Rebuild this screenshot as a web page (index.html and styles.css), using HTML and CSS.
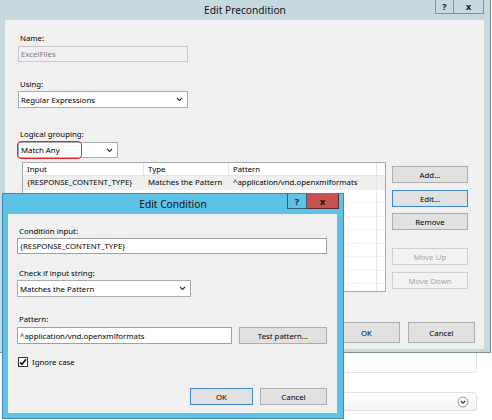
FILE: index.html
```html
<!DOCTYPE html>
<html>
<head>
<meta charset="utf-8">
<link rel="stylesheet" href="styles.css">
</head>
<body>
<div class="page">
  <div class="panel"></div>
  <div class="panel bar">
    <svg class="circle-chev" width="12" height="12" viewBox="0 0 12 12"><circle cx="6" cy="6" r="5" fill="#fafafa" stroke="#9a9a9a" stroke-width="1"/><path d="M3.8 5 L6 7.2 L8.2 5" fill="none" stroke="#444" stroke-width="1.2"/></svg>
  </div>
</div>

<div class="win outer">
  <div class="titlebar">
    <span></span>
    <span class="title">Edit Precondition</span>
    <span class="tb-buttons">
      <span class="tb-btn help">?</span><span class="tb-btn close">x</span>
    </span>
  </div>
  <div class="content oc">
    <div class="label first">Name:</div>
    <div class="field disabled w170">ExcelFiles</div>
    <div class="label l-using">Using:</div>
    <div class="field select w170 h17">Regular Expressions<svg width="7" height="5" viewBox="0 0 7 5"><path d="M1 1 L3.5 3.5 L6 1" fill="none" stroke="#333" stroke-width="1.1"/></svg></div>
    <div class="label l-group">Logical grouping:</div>
    <div class="group-wrap">
      <div class="field select w100">Match Any<svg width="7" height="5" viewBox="0 0 7 5"><path d="M1 1 L3.5 3.5 L6 1" fill="none" stroke="#333" stroke-width="1.1"/></svg></div>
      <div class="highlight"></div>
    </div>
    <div class="list-row">
      <div class="grid">
        <div class="gr head"><span class="c1">Input</span><span class="c2">Type</span><span class="c3">Pattern</span><span class="c4"></span></div>
        <div class="gr sel"><span class="c1">{RESPONSE_CONTENT_TYPE}</span><span class="c2">Matches the Pattern</span><span class="c3">^application/vnd.openxmlformats</span><span class="c4"></span></div>
        <div class="gr"><span class="c1"></span><span class="c2"></span><span class="c3"></span><span class="c4"></span></div>
        <div class="gr"><span class="c1"></span><span class="c2"></span><span class="c3"></span><span class="c4"></span></div>
        <div class="gr"><span class="c1"></span><span class="c2"></span><span class="c3"></span><span class="c4"></span></div>
        <div class="gr"><span class="c1"></span><span class="c2"></span><span class="c3"></span><span class="c4"></span></div>
        <div class="gr"><span class="c1"></span><span class="c2"></span><span class="c3"></span><span class="c4"></span></div>
        <div class="gr"><span class="c1"></span><span class="c2"></span><span class="c3"></span><span class="c4"></span></div>
        <div class="gr"><span class="c1"></span><span class="c2"></span><span class="c3"></span><span class="c4"></span></div>
        <div class="gr"><span class="c1"></span><span class="c2"></span><span class="c3"></span><span class="c4"></span></div>
      </div>
      <div class="side">
        <div class="btn b-add">Add...</div>
        <div class="btn focus b-edit">Edit...</div>
        <div class="btn b-remove">Remove</div>
        <div class="btn dis b-up">Move Up</div>
        <div class="btn dis b-down">Move Down</div>
      </div>
    </div>
    <div class="footer outer-foot">
      <div class="btn big w67">OK</div>
      <div class="btn big w67">Cancel</div>
    </div>
  </div>
</div>

<div class="win inner">
  <div class="titlebar">
    <span></span>
    <span class="title">Edit Condition</span>
    <span class="tb-buttons">
      <span class="tb-btn help">?</span><span class="tb-btn close">x</span>
    </span>
  </div>
  <div class="content ic">
    <div class="label i-first">Condition input:</div>
    <div class="field w310 white">{RESPONSE_CONTENT_TYPE}</div>
    <div class="label i-check">Check if input string:</div>
    <div class="field select w174 h17">Matches the Pattern<svg width="7" height="5" viewBox="0 0 7 5"><path d="M1 1 L3.5 3.5 L6 1" fill="none" stroke="#333" stroke-width="1.1"/></svg></div>
    <div class="label i-pat">Pattern:</div>
    <div class="pat-row">
      <div class="field w215 h17 white">^application/vnd.openxmlformats</div>
      <div class="btn w88">Test pattern...</div>
    </div>
    <div class="check-row">
      <span class="checkbox"><svg width="8" height="8" viewBox="0 0 8 8"><path d="M1 4.2 L3 6.3 L7 1.3" fill="none" stroke="#111" stroke-width="1.6"/></svg></span>
      <span>Ignore case</span>
    </div>
    <div class="footer inner-foot">
      <div class="btn focus w63">OK</div>
      <div class="btn w67">Cancel</div>
    </div>
  </div>
</div>
</body>
</html>
```
FILE: styles.css
```css
* { box-sizing: border-box; }
html, body { margin: 0; padding: 0; }
body {
  width: 492px; height: 420px; overflow: hidden; position: relative;
  background: #ffffff;
  font-family: "Noto Sans", "Open Sans", sans-serif;
  font-size: 7.8px; color: #000;
}
.page { padding-top: 300px; }
.panel {
  margin-left: 200px; width: 277px; height: 73px;
  border: 1px solid #e2e2e2; border-radius: 3px; background: #fff;
}
.panel.bar {
  margin-top: 19px; height: 19px;
  background: linear-gradient(#ffffff, #f3f3f3);
  display: flex; justify-content: flex-end; align-items: center; padding-right: 7px;
}

.win { position: absolute; display: flex; flex-direction: column; }
.outer {
  left: 0; top: 0; width: 491px; height: 353px;
  background: #c6d9df;
  border-right: 1px solid #7c8f97; border-bottom: 1px solid #7c8f97;
}
.inner {
  left: 2px; top: 193px; width: 342px; height: 226px;
  background: #5ec2e7;
  border: 1px solid #3b8db0;
}
.titlebar {
  height: 20px; flex: none;
  display: grid; grid-template-columns: 1fr auto 1fr; align-items: start;
}
.title { font-size: 10.2px; line-height: 20px; color: #111; }
.tb-buttons { justify-self: end; display: flex; }
.tb-btn {
  height: 14px; display: flex; align-items: center; justify-content: center;
  font-weight: bold; font-size: 9px; color: #111;
}
.outer .tb-buttons { margin-right: 6px; }
.outer .help { width: 19px; border: 1px solid #7f939b; border-top: none; }
.outer .close { width: 30px; border: 1px solid #7f939b; border-top: none; border-left: none; }
.inner .tb-buttons { margin-right: 4px; margin-top: 0; }
.inner .help { width: 20px; height: 15px; border: 1px solid #2f5f73; border-top: none; background: #5ec2e7; }
.inner .close { width: 32px; height: 15px; background: #c75050; border: 1px solid #5a2a2a; border-top: none; border-left: none; }

.content { background: #f0f0f0; flex: 1; display: flex; flex-direction: column; align-items: flex-start; }
.oc { margin: 0 6px 3px 5px; padding-left: 13px; }
.ic { margin: 0 6px 5px 5px; padding-left: 9px; }

.label { line-height: 11px; height: 11px; padding-left: 2px; }
.label.first { margin-top: 13px; }
.l-using { margin-top: 17px; }
.l-group { margin-top: 21px; }
.i-first { margin-top: 12px; }
.i-check { margin-top: 14px; }
.i-pat { margin-top: 17px; }

.field {
  height: 16px; border: 1px solid #acacac; background: #fff;
  padding-left: 2px; line-height: 14px; margin-top: 2px;
  display: flex; align-items: center; justify-content: space-between; padding-right: 4px;
  white-space: nowrap;
}
.field.h17 { height: 17px; margin-top: 1px; }
.field.disabled { background: #f0f0f0; border-color: #c8c8c8; color: #7a7a7a; }
.field.white { border-color: #a0a0a0; }
.w170 { width: 170px; }
.w100 { width: 100px; }
.w310 { width: 310px; margin-top: 1px; }
.w174 { width: 174px; }
.w215 { width: 215px; }

.group-wrap { position: relative; margin-top: 0; }
.highlight {
  position: absolute; left: -1px; top: 1px; width: 65px; height: 18px;
  border: 1.5px solid #e4242e; border-radius: 4px;
}

.list-row { display: flex; margin-top: 4px; align-items: flex-start; }
.grid {
  margin-left: 4px; width: 364px; height: 130px; overflow: hidden;
  border: 1px solid #a9a9a9; background: #fff;
}
.gr { display: flex; height: 13.5px; border-bottom: 1px solid #f0f0f0; white-space: nowrap; }
.gr.head { height: 13px; border-bottom: 1px solid #e5e5e5; }
.gr.sel { background: #efefef; }
.gr span { line-height: 13px; padding-left: 4px; overflow: hidden; }
.c1 { width: 121px; }
.c2 { width: 85px; }
.c3 { width: 148px; border-right: 1px solid #e5e5e5; }
.c4 { flex: 1; }
.head span { border-right: 1px solid #e5e5e5; }
.head .c4 { border-right: none; }

.side { margin-left: 6px; display: flex; flex-direction: column; width: 76px; }
.btn {
  height: 17px; border: 1px solid #adadad; background: #e1e1e1;
  display: flex; align-items: center; justify-content: center;
  white-space: nowrap;
}
.side .btn { width: 76px; }
.btn.focus { border-color: #3c8ad6; }
.btn.dis { background: #f2f2f2; border-color: #cfcfcf; color: #a5a5a5; }
.b-add { margin-top: 4px; }
.b-edit { margin-top: 7px; }
.b-remove { margin-top: 6px; }
.b-up { margin-top: 18px; }
.b-down { margin-top: 7px; }

.footer { display: flex; align-self: stretch; justify-content: flex-end; }
.outer-foot { margin-top: 30px; padding-right: 9px; gap: 8px; }
.btn.big { height: 21px; }
.w67 { width: 67px; }
.w63 { width: 63px; }
.w88 { width: 88px; }

.pat-row { display: flex; margin-top: 2px; gap: 7px; }
.pat-row .field { margin-top: 0; }
.check-row { display: flex; align-items: center; margin-top: 12px; height: 11px; margin-left: 1px; gap: 4px; }
.checkbox {
  width: 10px; height: 10px; border: 1px solid #333; background: #fff;
  display: flex; align-items: center; justify-content: center;
}
.inner-foot { margin-top: 21px; padding-right: 10px; gap: 7px; }
```
